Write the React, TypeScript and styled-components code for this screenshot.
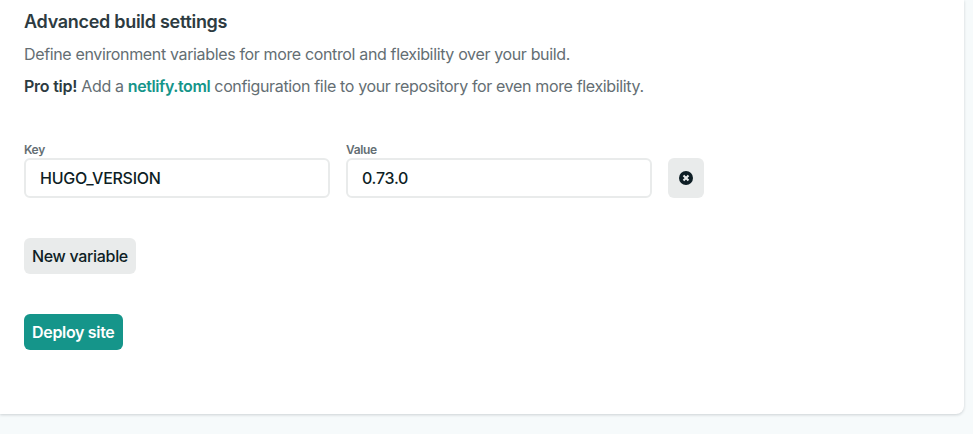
import React from "react";
import styled, { createGlobalStyle } from "styled-components";

const GlobalStyle = createGlobalStyle`
  * { box-sizing: border-box; }
  body {
    margin: 0;
    background: #f6fafb;
    font-family: Inter, sans-serif;
    font-size: 16px;
    line-height: 24px;
    letter-spacing: -0.355px;
    color: #646e73;
    overflow: hidden;
    -webkit-font-smoothing: antialiased;
  }
`;

const Page = styled.main`
  height: 434px;
  padding-right: 9px;
`;

const Card = styled.section`
  height: 414px;
  padding: 10px 24px 0;
  background: #fff;
  border-radius: 0 0 8px 0;
  box-shadow: 0 1px 3px rgba(14, 30, 37, 0.18);
`;

const Title = styled.h3`
  margin: 0 0 8px;
  font-size: 18px;
  line-height: 24px;
  font-weight: 600;
  letter-spacing: -0.29px;
  color: #2d3b41;
`;

const Paragraph = styled.p`
  margin: 0 0 8px;
  white-space: nowrap;
`;

const Strong = styled.strong`
  font-weight: 600;
  letter-spacing: -0.24px;
  color: #2d3b41;
`;

const Link = styled.a`
  font-weight: 600;
  letter-spacing: -0.4px;
  color: #15958a;
`;

const Row = styled.form`
  display: flex;
  align-items: flex-end;
  gap: 16px;
  margin-top: 43px;
`;

const Field = styled.label`
  display: flex;
  flex-direction: column;
  width: 306px;
  margin-top: 1px;
  font-size: 12px;
  line-height: 16px;
  font-weight: 600;
  letter-spacing: -0.35px;
`;

const Input = styled.input`
  height: 40px;
  padding: 0 14px;
  border: 2px solid #e9ebeb;
  border-radius: 6px;
  font: 500 16px Inter, sans-serif;
  letter-spacing: -0.28px;
  color: #0e1e25;
`;

const Button = styled.button<{ $primary?: boolean }>`
  display: block;
  width: ${(p) => (p.$primary ? "99px" : "112px")};
  height: 36px;
  margin-top: 40px;
  padding: 0 8px;
  border: 0;
  border-radius: 6px;
  font: ${(p) => (p.$primary ? 600 : 500)} 16px Inter, sans-serif;
  letter-spacing: -0.32px;
  text-align: left;
  white-space: nowrap;
  color: ${(p) => (p.$primary ? "#fff" : "#0e1e25")};
  background: ${(p) => (p.$primary ? "#15958a" : "#e9ebeb")};
`;

const RemoveButton = styled.button`
  display: flex;
  align-items: center;
  justify-content: center;
  width: 36px;
  height: 40px;
  padding: 0;
  border: 0;
  border-radius: 6px;
  background: #e9ebeb;
`;

export default function App() {
  return (
    <Page>
      <GlobalStyle />
      <Card>
        <Title>Advanced build settings</Title>
        <Paragraph>Define environment variables for more control and flexibility over your build.</Paragraph>
        <Paragraph>
          <Strong>Pro tip!</Strong> Add a <Link>netlify.toml</Link> configuration file to your repository for even more flexibility.
        </Paragraph>
        <Row>
          <Field>Key<Input defaultValue="HUGO_VERSION" /></Field>
          <Field>Value<Input defaultValue="0.73.0" /></Field>
          <RemoveButton type="button" aria-label="Remove variable">
            <svg width="14" height="14" viewBox="0 0 14 14">
              <circle cx="7" cy="7" r="7" fill="#0e1e25" />
              <path d="M4.5 4.5l5 5M9.5 4.5L4.5 9.5" stroke="#e9ebeb" strokeWidth="2.1" />
            </svg>
          </RemoveButton>
        </Row>
        <Button>New variable</Button>
        <Button $primary>Deploy site</Button>
      </Card>
    </Page>
  );
}
